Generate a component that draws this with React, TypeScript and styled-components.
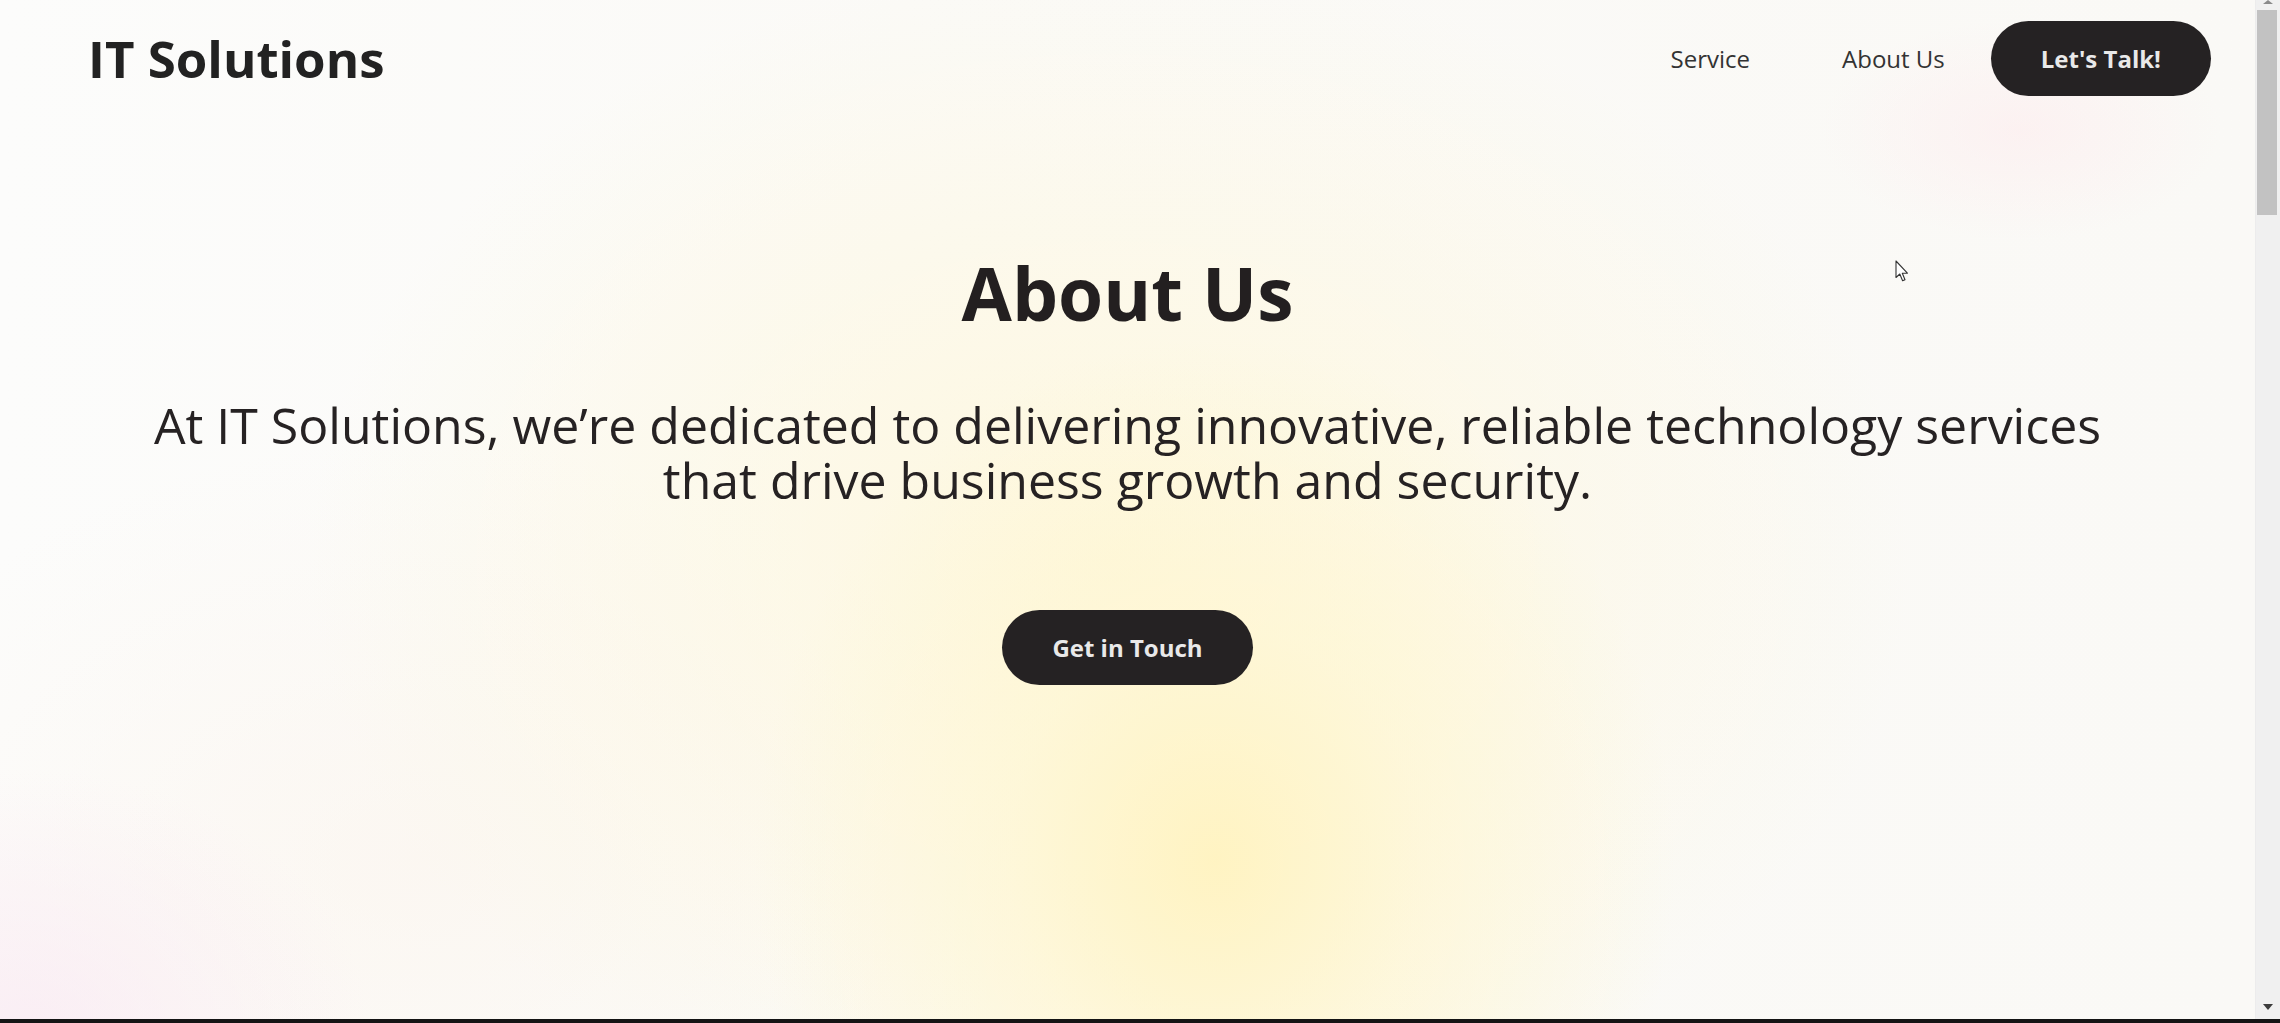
import React from "react";
import styled, { createGlobalStyle } from "styled-components";

const GlobalStyle = createGlobalStyle`
  html, body {
    margin: 0;
    padding: 0;
    height: 100%;
    overflow: hidden;
  }
  body {
    font-family: "Open Sans", "Noto Sans", "DejaVu Sans", sans-serif;
    color: #231f20;
    background: #111;
  }
  #root {
    height: 100%;
  }
  * {
    box-sizing: border-box;
  }
`;

const Root = styled.div`
  height: 100vh;
  display: flex;
  flex-direction: column;
`;

const Viewport = styled.div`
  flex: 1;
  min-height: 0;
  display: flex;
  overflow: hidden;
`;

const Hero = styled.section`
  position: relative;
  flex: 1;
  min-width: 0;
  display: flex;
  flex-direction: column;
  background:
    radial-gradient(ellipse 460px 520px at 1215px 860px, rgba(255, 243, 192, 0.95) 0%, rgba(255, 246, 206, 0.6) 45%, rgba(255, 249, 228, 0) 100%),
    radial-gradient(ellipse 800px 600px at 1110px 560px, rgba(255, 247, 216, 0.8) 0%, rgba(255, 249, 232, 0) 100%),
    radial-gradient(ellipse 200px 110px at 2020px 130px, rgba(253, 236, 238, 0.6) 0%, rgba(253, 236, 238, 0) 100%),
    radial-gradient(ellipse 340px 260px at 30px 1030px, rgba(249, 232, 242, 0.7) 0%, rgba(250, 234, 242, 0) 100%),
    radial-gradient(ellipse 600px 420px at 420px 860px, rgba(252, 242, 232, 0.45) 0%, rgba(252, 242, 232, 0) 100%),
    linear-gradient(90deg, #fcfcfb 0%, #fbfaf7 40%, #faf9f6 100%);
`;

const Header = styled.header`
  height: 117px;
  display: flex;
  align-items: center;
  justify-content: space-between;
  padding: 0 44px 0 88px;
`;

const Logo = styled.div`
  font-size: 51px;
  font-weight: 700;
  color: #222;
  line-height: 1.36;
`;

const Nav = styled.nav`
  display: flex;
  align-items: center;
`;

const NavLinks = styled.div`
  display: flex;
  align-items: center;
  gap: 92px;
  margin-right: 46px;
`;

const NavLink = styled.a`
  font-size: 24px;
  color: #333;
  text-decoration: none;
  cursor: pointer;
`;

const PillButton = styled.button`
  height: 75px;
  padding: 0 50px;
  border: none;
  border-radius: 38px;
  background: #252223;
  color: #e9e9e9;
  font-family: "Open Sans", "Noto Sans", sans-serif;
  font-size: 24px;
  font-weight: 700;
  cursor: pointer;
  display: inline-flex;
  align-items: center;
  justify-content: center;
  white-space: nowrap;
`;

const Main = styled.main`
  display: flex;
  flex-direction: column;
  align-items: center;
  padding-top: 131px;
  text-align: center;
`;

const Title = styled.h1`
  margin: 0;
  font-size: 73px;
  line-height: 90px;
  font-weight: 700;
  color: #231f20;
`;

const Lead = styled.p`
  margin: 60px 0 0;
  max-width: 2010px;
  font-size: 50px;
  line-height: 55px;
  font-weight: 400;
  color: #262223;
`;

const CtaWrap = styled.div`
  margin-top: 102px;
`;

const CursorMark = styled.svg`
  position: absolute;
  left: 1895px;
  top: 260px;
  width: 14px;
  height: 23px;
  pointer-events: none;
`;

const ScrollRail = styled.div`
  width: 25px;
  flex-shrink: 0;
  display: flex;
  flex-direction: column;
  background: #f0f0f0;
  border-left: 1px solid #ececec;
`;

const ArrowBox = styled.div<{ $height: number }>`
  height: ${(p) => p.$height}px;
  flex-shrink: 0;
  display: flex;
  justify-content: center;
  align-items: ${(p) => (p.$height < 12 ? "flex-start" : "center")};
`;

const ArrowUp = styled.div`
  width: 0;
  height: 0;
  border-left: 5px solid transparent;
  border-right: 5px solid transparent;
  border-bottom: 4px solid #8a8a8a;
`;

const ArrowDown = styled.div`
  width: 0;
  height: 0;
  border-left: 5px solid transparent;
  border-right: 5px solid transparent;
  border-top: 6px solid #3c3c3c;
`;

const Thumb = styled.div`
  height: 205px;
  margin: 0 3px 0 1px;
  background: #c2c2c2;
  flex-shrink: 0;
`;

const Track = styled.div`
  flex: 1;
`;

const BottomBar = styled.div`
  height: 4px;
  flex-shrink: 0;
  background: #141414;
`;

export default function App() {
  return (
    <Root>
      <GlobalStyle />
      <Viewport>
        <Hero>
          <Header>
            <Logo>IT Solutions</Logo>
            <Nav>
              <NavLinks>
                <NavLink>Service</NavLink>
                <NavLink>About Us</NavLink>
              </NavLinks>
              <PillButton>Let's Talk!</PillButton>
            </Nav>
          </Header>
          <Main>
            <Title>About Us</Title>
            <Lead>
              At IT Solutions, we’re dedicated to delivering innovative, reliable technology services that drive
              business growth and security.
            </Lead>
            <CtaWrap>
              <PillButton>Get in Touch</PillButton>
            </CtaWrap>
          </Main>
          <CursorMark viewBox="0 0 14 23">
            <path
              d="M1 1 L1 17.5 L4.8 14 L7.6 20.8 L10 19.8 L7.3 13.2 L12.4 13.2 Z"
              fill="#ffffff"
              stroke="#333"
              strokeWidth="1.1"
              strokeLinejoin="round"
            />
          </CursorMark>
        </Hero>
        <ScrollRail>
          <ArrowBox $height={10}>
            <ArrowUp />
          </ArrowBox>
          <Thumb />
          <Track />
          <ArrowBox $height={24}>
            <ArrowDown />
          </ArrowBox>
        </ScrollRail>
      </Viewport>
      <BottomBar />
    </Root>
  );
}
